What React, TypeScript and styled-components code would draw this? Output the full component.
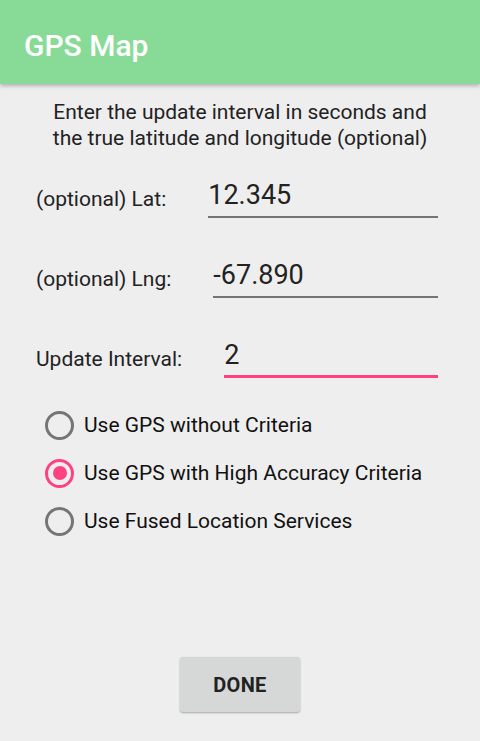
import React from "react";
import styled, { createGlobalStyle } from "styled-components";

const Global = createGlobalStyle`
  html, body { margin: 0; padding: 0; background: #eeeeee; }
  body { font-family: Roboto, "Noto Sans", sans-serif; }
  * { box-sizing: border-box; }
`;

const Screen = styled.div`
  width: 480px;
  height: 741px;
  background: #eeeeee;
  display: flex;
  flex-direction: column;
  overflow: hidden;
`;

const AppBar = styled.header`
  height: 84px;
  flex-shrink: 0;
  background: #88db96;
  display: flex;
  align-items: center;
  padding: 6px 24px 0;
  box-shadow: 0 2px 4px rgba(0, 0, 0, 0.25);
  position: relative;
  z-index: 1;
`;

const Title = styled.h1`
  margin: 0;
  color: #ffffff;
  font-size: 30px;
  line-height: 35px;
  font-weight: 500;
  font-family: Roboto, sans-serif;
`;

const Intro = styled.p`
  margin: 15px 0 0;
  text-align: center;
  color: #222222;
  font-size: 21px;
  line-height: 26px;
`;

const Form = styled.div`
  display: flex;
  flex-direction: column;
  gap: 41px;
  padding: 0 42px 0 36px;
  margin-top: 28px;
`;

const Row = styled.div`
  display: flex;
  align-items: flex-end;
`;

const Label = styled.span`
  font-size: 21px;
  line-height: 25px;
  color: #222222;
  margin-right: 42px;
  padding-bottom: 6px;
  white-space: nowrap;
`;

const Field = styled.div<{ $active?: boolean }>`
  flex: 1;
  font-size: 27px;
  color: #222222;
  line-height: 32px;
  padding-bottom: ${(p) => (p.$active ? "4px" : "5px")};
  border-bottom: ${(p) => (p.$active ? "3px solid #ff4081" : "2px solid #757575")};
`;

const Radios = styled.div`
  display: flex;
  flex-direction: column;
  padding: 23px 0 0 45px;
`;

const RadioRow = styled.div`
  display: flex;
  align-items: center;
  height: 48px;
`;

const Circle = styled.span<{ $on?: boolean }>`
  width: 29px;
  height: 29px;
  border-radius: 50%;
  border: 3px solid ${(p) => (p.$on ? "#ff4081" : "#757575")};
  display: flex;
  align-items: center;
  justify-content: center;
  margin-right: 10px;
  &::after {
    content: "";
    display: ${(p) => (p.$on ? "block" : "none")};
    width: 14px;
    height: 14px;
    border-radius: 50%;
    background: #ff4081;
  }
`;

const RadioText = styled.span`
  font-size: 21px;
  color: #111111;
`;

const Spacer = styled.div`
  flex: 1;
`;

const ButtonWrap = styled.div`
  display: flex;
  justify-content: center;
  padding-bottom: 29px;
`;

const Button = styled.button`
  width: 120px;
  height: 55px;
  border: none;
  border-radius: 3px;
  background: #d6d7d7;
  color: #222222;
  font-family: Roboto, sans-serif;
  font-weight: 700;
  font-size: 20px;
  letter-spacing: 0.3px;
  box-shadow: 0 1px 2px rgba(0, 0, 0, 0.3);
`;

export default function App() {
  const options = [
    { label: "Use GPS without Criteria", on: false },
    { label: "Use GPS with High Accuracy Criteria", on: true },
    { label: "Use Fused Location Services", on: false },
  ];
  return (
    <Screen>
      <Global />
      <AppBar>
        <Title>GPS Map</Title>
      </AppBar>
      <Intro>
        Enter the update interval in seconds and
        <br />
        the true latitude and longitude (optional)
      </Intro>
      <Form>
        <Row>
          <Label>(optional) Lat:</Label>
          <Field>12.345</Field>
        </Row>
        <Row>
          <Label>(optional) Lng:</Label>
          <Field>-67.890</Field>
        </Row>
        <Row>
          <Label>Update Interval:</Label>
          <Field $active>2</Field>
        </Row>
      </Form>
      <Radios>
        {options.map((o) => (
          <RadioRow key={o.label}>
            <Circle $on={o.on} />
            <RadioText>{o.label}</RadioText>
          </RadioRow>
        ))}
      </Radios>
      <Spacer />
      <ButtonWrap>
        <Button>DONE</Button>
      </ButtonWrap>
    </Screen>
  );
}
